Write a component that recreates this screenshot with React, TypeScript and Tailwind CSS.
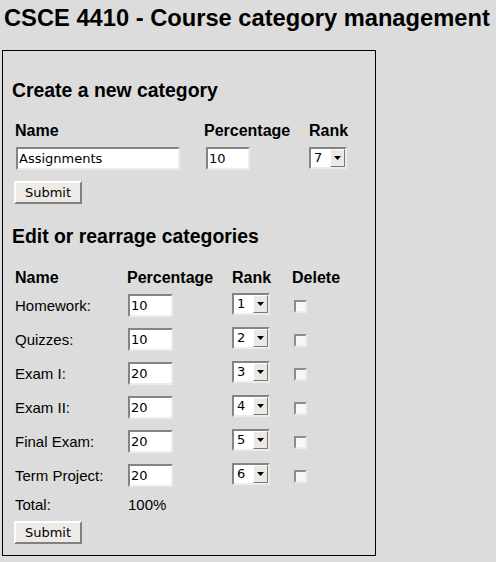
import React from "react";

const inputCls =
  "h-[23px] border-2 border-t-[#848484] border-l-[#848484] border-b-[#ececec] border-r-[#ececec] bg-white px-[1px] py-0 font-['DejaVu_Sans',sans-serif] text-[13px] text-black outline-none";

function Select({ value }: { value: string }) {
  return (
    <div className="flex h-[22px] w-[38px] border-2 border-t-[#848484] border-l-[#848484] border-b-[#ececec] border-r-[#ececec] bg-white">
      <span className="flex-1 pl-[3px] font-['DejaVu_Sans',sans-serif] text-[13px] leading-[18px] text-black">
        {value}
      </span>
      <span className="flex w-[15px] items-center justify-center border border-t-white border-l-white border-b-[#7a7a7a] border-r-[#7a7a7a] bg-[#ece9e4]">
        <svg width="7" height="4" viewBox="0 0 7 4">
          <path d="M0 0 H7 L3.5 4 Z" fill="#000" />
        </svg>
      </span>
    </div>
  );
}

function Checkbox() {
  return (
    <div className="mt-[7px] ml-[2px] h-[13px] w-[13px] border-2 border-t-[#8c8c8c] border-l-[#8c8c8c] border-b-[#ececec] border-r-[#ececec] bg-[#f8f8f8]" />
  );
}

function Button() {
  return (
    <button className="h-[23px] w-[68px] border-2 border-t-white border-l-white border-b-[#808080] border-r-[#808080] bg-[#eeebe7] p-0 font-['DejaVu_Sans',sans-serif] text-[13px] text-black">
      Submit
    </button>
  );
}

const rows = [
  { name: "Homework:", pct: "10", rank: "1" },
  { name: "Quizzes:", pct: "10", rank: "2" },
  { name: "Exam I:", pct: "20", rank: "3" },
  { name: "Exam II:", pct: "20", rank: "4" },
  { name: "Final Exam:", pct: "20", rank: "5" },
  { name: "Term Project:", pct: "20", rank: "6" },
];

export default function App() {
  return (
    <div className="min-h-[562px] w-full bg-[#dcdcdc] font-['Liberation_Sans',Arial,sans-serif] text-black">
      <h1 className="whitespace-nowrap pl-[4px] pt-[4px] text-[23.7px] font-bold leading-[28px]">
        CSCE 4410 - Course category management
      </h1>
      <div className="ml-[2px] mt-[18px] h-[506px] w-[374px] border border-black pt-[28px]">
        <h3 className="whitespace-nowrap pl-[9px] text-[19.4px] font-bold leading-[22px]">
          Create a new category
        </h3>
        <div className="mt-[21px] flex pl-[12px] text-[16px] font-bold leading-[18px]">
          <div className="w-[189px]">Name</div>
          <div className="w-[105px]">Percentage</div>
          <div>Rank</div>
        </div>
        <div className="mt-[6px] flex pl-[12px]">
          <div className="w-[189px] pl-[1px]">
            <input className={inputCls + " w-[164px]"} defaultValue="Assignments" />
          </div>
          <div className="w-[105px] pl-[2px]">
            <input className={inputCls + " w-[44px]"} defaultValue="10" />
          </div>
          <div className="pt-[1px]">
            <Select value="7" />
          </div>
        </div>
        <div className="mt-[10px] pl-[11px]">
          <Button />
        </div>

        <h3 className="mt-[21px] whitespace-nowrap pl-[9px] text-[19.4px] font-bold leading-[22px]">
          Edit or rearrage categories
        </h3>
        <div className="mt-[22px] flex pl-[12px] text-[16px] font-bold leading-[18px]">
          <div className="w-[112px]">Name</div>
          <div className="w-[105px]">Percentage</div>
          <div className="w-[60px]">Rank</div>
          <div>Delete</div>
        </div>
        <div className="mt-[6px] flex flex-col gap-[11px]">
          {rows.map((r) => (
            <div key={r.name} className="flex h-[23px] pl-[12px]">
              <div className="w-[112px] pt-[4px] text-[15px] leading-[17px]">{r.name}</div>
              <div className="w-[105px] pl-[1px]">
                <input className={inputCls + " w-[45px]"} defaultValue={r.pct} />
              </div>
              <div className="w-[60px]">
                <Select value={r.rank} />
              </div>
              <Checkbox />
            </div>
          ))}
        </div>
        <div className="mt-[10px] flex pl-[12px] text-[15px] leading-[17px]">
          <div className="w-[113px]">Total:</div>
          <div>100%</div>
        </div>
        <div className="mt-[7px] pl-[11px]">
          <Button />
        </div>
      </div>
    </div>
  );
}
